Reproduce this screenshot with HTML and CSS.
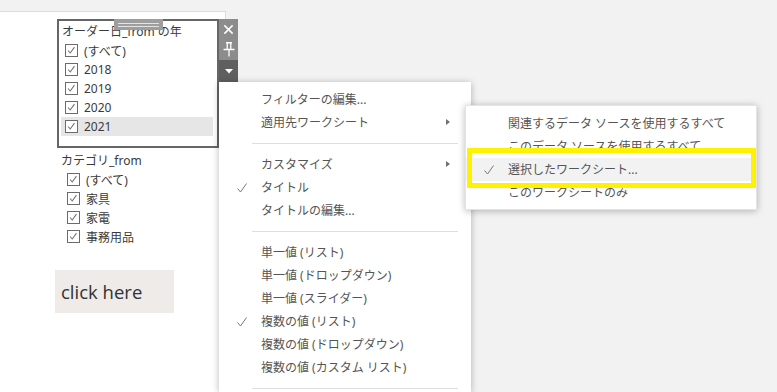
FILE: index.html
```html
<!DOCTYPE html>
<html lang="ja">
<head>
    <meta charset="UTF-8">
    <meta name="viewport" content="width=device-width, initial-scale=1.0">
    <title>フィルター メニュー</title>
    <link rel="stylesheet" href="styles.css">
</head>
<body>
    <div class="dashboard">
        <div class="filter-wrap">
            <div class="filter selected">
                <div class="grip"><span></span><span></span></div>
                <div class="filter-title">オーダー日_from の年</div>
                <ul class="check-list">
                    <li><span class="box"><svg viewBox="0 0 13 13"><path d="M2.5 6.5l2.5 3L10 2.5"/></svg></span>(すべて)</li>
                    <li><span class="box"><svg viewBox="0 0 13 13"><path d="M2.5 6.5l2.5 3L10 2.5"/></svg></span>2018</li>
                    <li><span class="box"><svg viewBox="0 0 13 13"><path d="M2.5 6.5l2.5 3L10 2.5"/></svg></span>2019</li>
                    <li><span class="box"><svg viewBox="0 0 13 13"><path d="M2.5 6.5l2.5 3L10 2.5"/></svg></span>2020</li>
                    <li class="hover"><span class="box"><svg viewBox="0 0 13 13"><path d="M2.5 6.5l2.5 3L10 2.5"/></svg></span>2021</li>
                </ul>
            </div>
            <div class="filter-tools">
                <div class="tool">
                    <svg viewBox="0 0 12 12"><path d="M1.5 1.5l9 9M10.5 1.5l-9 9"/></svg>
                </div>
                <div class="tool">
                    <svg viewBox="0 0 12 15"><path d="M3 0.75h6M4.25 0.75v6.5M7.75 0.75v6.5M0.5 7.5h11M6 7.5v7"/></svg>
                </div>
                <div class="tool dark">
                    <svg viewBox="0 0 8 5"><path class="fill" d="M0 0h8L4 4.5z"/></svg>
                </div>
            </div>
        </div>

        <div class="filter">
            <div class="filter-title">カテゴリ_from</div>
            <ul class="check-list">
                <li><span class="box"><svg viewBox="0 0 13 13"><path d="M2.5 6.5l2.5 3L10 2.5"/></svg></span>(すべて)</li>
                <li><span class="box"><svg viewBox="0 0 13 13"><path d="M2.5 6.5l2.5 3L10 2.5"/></svg></span>家具</li>
                <li><span class="box"><svg viewBox="0 0 13 13"><path d="M2.5 6.5l2.5 3L10 2.5"/></svg></span>家電</li>
                <li><span class="box"><svg viewBox="0 0 13 13"><path d="M2.5 6.5l2.5 3L10 2.5"/></svg></span>事務用品</li>
            </ul>
        </div>

        <div class="click-btn">click here</div>
    </div>

    <div class="menu main-menu">
        <div class="item">フィルターの編集...</div>
        <div class="item">適用先ワークシート<span class="arrow"></span></div>
        <div class="sep"></div>
        <div class="item">カスタマイズ<span class="arrow"></span></div>
        <div class="item"><svg class="tick" viewBox="0 0 10 10"><path d="M0.5 5.5l3 3.5L9.5 0.5"/></svg>タイトル</div>
        <div class="item">タイトルの編集...</div>
        <div class="sep"></div>
        <div class="item">単一値 (リスト)</div>
        <div class="item">単一値 (ドロップダウン)</div>
        <div class="item">単一値 (スライダー)</div>
        <div class="item"><svg class="tick" viewBox="0 0 10 10"><path d="M0.5 5.5l3 3.5L9.5 0.5"/></svg>複数の値 (リスト)</div>
        <div class="item">複数の値 (ドロップダウン)</div>
        <div class="item">複数の値 (カスタム リスト)</div>
        <div class="sep"></div>
    </div>

    <div class="menu sub-menu">
        <div class="item">関連するデータ ソースを使用するすべて</div>
        <div class="item">このデータ ソースを使用するすべて</div>
        <div class="item active"><svg class="tick" viewBox="0 0 10 10"><path d="M0.5 5.5l3 3.5L9.5 0.5"/></svg>選択したワークシート...</div>
        <div class="item">このワークシートのみ</div>
    </div>

    <div class="callout"></div>
</body>
</html>
```

FILE: styles.css
```css
body {
    margin: 0;
    padding-top: 11px;
    height: 392px;
    box-sizing: border-box;
    overflow: hidden;
    background-color: #f2f2f2;
    font-family: "Noto Sans", "Noto Sans CJK JP", sans-serif;
    font-size: 12px;
    color: #3a3a3a;
}

.dashboard {
    width: 226px;
    height: 381px;
    box-sizing: border-box;
    background-color: #fff;
    border-top: 1px solid #dcdcdc;
    border-right: 1px solid #dcdcdc;
    padding-top: 7px;
}

.filter-wrap {
    position: relative;
    width: 162px;
    margin-left: 57px;
}

.filter {
    width: 162px;
    margin-left: 57px;
    box-sizing: border-box;
    border: 2px solid transparent;
    padding: 1px 0 9px;
}

.filter-wrap .filter {
    margin-left: 0;
}

.filter.selected {
    position: relative;
    height: 129px;
    border-color: #666;
}

.grip {
    position: absolute;
    left: 55px;
    top: -2px;
    width: 49px;
    height: 11px;
    background-color: #9e9e9e;
    display: flex;
    flex-direction: column;
    align-items: center;
    justify-content: center;
    gap: 2px;
}

.grip span {
    display: block;
    width: 41px;
    height: 1px;
    background-color: #e4e4e4;
}

.filter-title {
    height: 19px;
    line-height: 19px;
    padding-left: 2px;
    white-space: nowrap;
}

.filter.selected .filter-title {
    padding-left: 3px;
}

.check-list {
    list-style: none;
    margin: 0;
    padding: 0 4px 0 2px;
}

.check-list li {
    display: flex;
    align-items: center;
    gap: 6px;
    height: 19px;
    padding-left: 6px;
    white-space: nowrap;
}

.filter.selected .check-list li {
    padding-left: 4px;
}

.check-list li.hover {
    background-color: #e6e6e6;
}

.box {
    display: block;
    width: 13px;
    height: 13px;
    box-sizing: border-box;
    border: 1px solid #6b6b6b;
    background-color: #fff;
}

.box svg {
    display: block;
    width: 11px;
    height: 11px;
    fill: none;
    stroke: #6e6e6e;
    stroke-width: 1.2;
}

.filter-tools {
    position: absolute;
    left: 162px;
    top: 0;
    width: 19px;
    display: flex;
    flex-direction: column;
}

.tool {
    height: 21px;
    display: flex;
    align-items: center;
    justify-content: center;
    background-color: #8c8c8c;
}

.tool:first-child {
    height: 20px;
}

.tool.dark {
    height: 22px;
    background-color: #5f5f5f;
}

.tool svg {
    width: 11px;
    height: 11px;
    fill: none;
    stroke: #fff;
    stroke-width: 1.6;
}

.tool:nth-child(2) svg {
    width: 12px;
    height: 15px;
    stroke-width: 1.3;
}

.tool.dark svg {
    width: 8px;
    height: 5px;
    stroke: none;
}

.tool .fill {
    fill: #fff;
}

.click-btn {
    width: 119px;
    height: 43px;
    margin: 13px 0 0 55px;
    box-sizing: border-box;
    padding-left: 6px;
    display: flex;
    align-items: center;
    background-color: #eeebe8;
    font-family: "Open Sans", sans-serif;
    font-size: 18.5px;
    color: #333;
}

.menu {
    position: absolute;
    background-color: #fff;
    box-shadow: 0 1px 7px rgba(0, 0, 0, 0.28);
    color: #555;
}

.main-menu {
    left: 219px;
    top: 82px;
    width: 252px;
    height: 310px;
    box-sizing: border-box;
    padding-top: 6px;
    overflow: hidden;
}

.sub-menu {
    left: 465px;
    top: 105px;
    width: 292px;
    height: 105px;
    box-sizing: border-box;
    padding-top: 6px;
    border: 1px solid #e4e4e4;
}

.item {
    position: relative;
    height: 23px;
    line-height: 23px;
    padding-left: 42px;
    white-space: nowrap;
}

.item.active {
    background-color: #f2f2f2;
}

.tick {
    position: absolute;
    left: 18px;
    top: 7px;
    width: 10px;
    height: 10px;
    fill: none;
    stroke: #777;
    stroke-width: 1;
}

.arrow {
    position: absolute;
    left: 227px;
    top: 8px;
    width: 0;
    height: 0;
    border-top: 3.5px solid transparent;
    border-bottom: 3.5px solid transparent;
    border-left: 4px solid #707070;
}

.sep {
    height: 1px;
    margin: 9px 13px 9px 33px;
    background-color: #dedede;
}

.callout {
    position: absolute;
    left: 467px;
    top: 148px;
    width: 289px;
    height: 40px;
    box-sizing: border-box;
    border: 5px solid #fff200;
}
```
